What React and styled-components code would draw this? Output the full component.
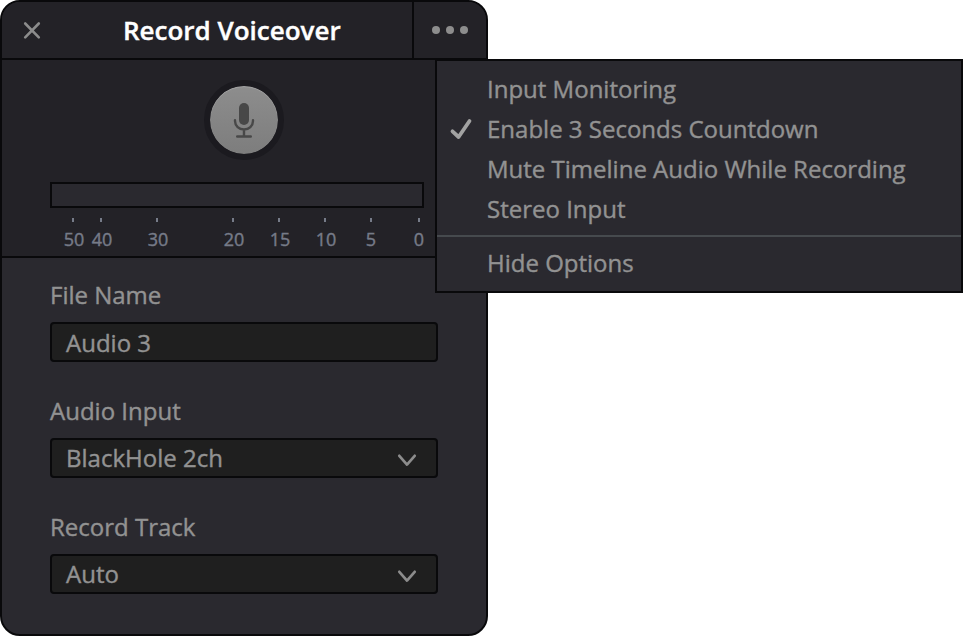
import React from "react";
import styled, { createGlobalStyle } from "styled-components";

const GlobalStyle = createGlobalStyle`
  :root {
    --line: #09090b;
    --surface: #2a292f;
    --surface-dark: #232227;
    --text: #929292;
    --scale: #767b88;
  }

  * {
    box-sizing: border-box;
  }

  body {
    margin: 0;
    background: #fff;
    color: var(--text);
    font-family: "Open Sans", "Noto Sans", sans-serif;
    font-size: 24px;
    line-height: 40px;
    -webkit-text-stroke: 0.4px currentColor;
  }
`;

const Panel = styled.div`
  position: relative;
  width: 488px;
  height: 636px;
  background: var(--surface);
  border: 2px solid var(--line);
  border-radius: 20px;
`;

const Header = styled.header`
  display: flex;
  height: 58px;
  background: var(--surface-dark);
  border-bottom: 2px solid var(--line);
  border-radius: 18px 18px 0 0;
`;

const IconButton = styled.button`
  display: flex;
  align-items: center;
  justify-content: center;
  width: ${props => props.$width}px;
  height: 56px;
  padding: 0;
  border: 0;
  border-left: ${props => (props.$divided ? "2px solid var(--line)" : "0")};
  background: none;
`;

const Title = styled.h1`
  flex: 1;
  margin: 0;
  padding-left: 61px;
  color: #fff;
  font-size: 26px;
  font-weight: 600;
  line-height: 57px;
  white-space: nowrap;
`;

const Recorder = styled.section`
  display: flex;
  flex-direction: column;
  height: 198px;
  padding: 20px 62px 0 48px;
  background: var(--surface-dark);
  border-bottom: 2px solid var(--line);
`;

const RecordButton = styled.button`
  width: 80px;
  height: 80px;
  margin-left: 154px;
  padding: 0;
  border: 6px solid #1b1a1f;
  border-radius: 50%;
  background: linear-gradient(#8d8d8d, #7d7d7d) padding-box;
  box-shadow: inset 0 1px 1px #a2a2a2;

  svg {
    display: block;
  }
`;

const Meter = styled.div`
  height: 26px;
  margin-top: 22px;
  background: var(--surface);
  border: 2px solid var(--line);
`;

const Scale = styled.div`
  display: flex;
  padding-top: 10px;
`;

const Mark = styled.div`
  display: flex;
  flex-direction: column;
  align-items: center;
  width: 0;
  margin-left: ${props => props.$gap}px;
  color: var(--scale);
  font-size: 18px;
  line-height: 24px;

  &::before {
    content: "";
    width: 2px;
    height: 4px;
    margin-bottom: 5px;
    background: currentColor;
  }

  span {
    margin-left: ${props => props.$nudge}px;
  }
`;

const Form = styled.form`
  display: flex;
  flex-direction: column;
  gap: 29px;
  padding: 17px 48px 0;
`;

const Field = styled.div`
  display: flex;
  flex-direction: column;
  gap: 7px;
`;

const Label = styled.span`
  height: 40px;
`;

const Control = styled.div`
  display: flex;
  align-items: center;
  justify-content: space-between;
  height: 40px;
  padding: 0 18px 0 14px;
  background: #1f1f1f;
  border: 2px solid var(--line);
  border-radius: 4px;

  svg {
    margin-top: 5px;
  }
`;

const Value = styled.span`
  line-height: ${props => (props.$select ? 38 : 36)}px;
  padding-top: ${props => (props.$select ? 0 : 2)}px;
`;

const Menu = styled.div`
  position: absolute;
  top: 57px;
  left: 433px;
  width: 528px;
  height: 234px;
  padding-top: 8px;
  background: var(--surface);
  border: 2px solid var(--line);
`;

const MenuItem = styled.div`
  display: grid;
  grid-template-columns: 50px auto;
  align-items: center;
  height: 40px;
  white-space: nowrap;

  span {
    grid-column: 2;
  }
`;

const Separator = styled.div`
  height: 2px;
  margin: 6px 0;
  background: #464a4e;
`;

const CloseIcon = () => (
  <svg width="20" height="20" viewBox="0 0 20 20">
    <path
      d="M3.2 3.5 16.8 17.3M16.8 3.5 3.2 17.3"
      stroke="#8c8c8c"
      strokeWidth="2.6"
      strokeLinecap="round"
    />
  </svg>
);

const MoreIcon = () => (
  <svg width="38" height="10" viewBox="0 0 38 10" fill="#8d8d8d">
    <circle cx="5" cy="5" r="4" />
    <circle cx="19" cy="5" r="4" />
    <circle cx="33" cy="5" r="4" />
  </svg>
);

const MicIcon = () => (
  <svg width="68" height="68" viewBox="0 0 68 68" fill="none">
    <rect x="29" y="17" width="10" height="22" rx="5" fill="#484848" />
    <path
      d="M25 34.2v.8a9 8.5 0 0 0 18 0v-.8M34 43.5V50M27.2 50.5h13.6"
      stroke="#484848"
      strokeWidth="2.4"
      strokeLinecap="round"
    />
  </svg>
);

const ChevronIcon = () => (
  <svg width="22" height="16" viewBox="0 0 22 16" fill="none">
    <path
      d="M3.3 2.8 11 11.6 18.7 2.8"
      stroke="#8c8c8c"
      strokeWidth="2.7"
      strokeLinecap="round"
      strokeLinejoin="round"
    />
  </svg>
);

const CheckIcon = () => (
  <svg width="50" height="40" viewBox="0 0 50 40" fill="none">
    <path
      d="M15.5 22.3 21.6 28 32.5 12"
      stroke="#a2a2a2"
      strokeWidth="3.8"
      strokeLinecap="round"
      strokeLinejoin="round"
    />
  </svg>
);

// gap is the distance in px from the previous mark
const marks = [
  { value: 50, gap: 23, nudge: 2 },
  { value: 40, gap: 28, nudge: 2 },
  { value: 30, gap: 56, nudge: 2 },
  { value: 20, gap: 76, nudge: 2 },
  { value: 15, gap: 46, nudge: 2 },
  { value: 10, gap: 46, nudge: 2 },
  { value: 5, gap: 46, nudge: 0 },
  { value: 0, gap: 48, nudge: 0 }
];

const fields = [
  { label: "File Name", value: "Audio 3" },
  { label: "Audio Input", value: "BlackHole 2ch", select: true },
  { label: "Record Track", value: "Auto", select: true }
];

const options = [
  { label: "Input Monitoring" },
  { label: "Enable 3 Seconds Countdown", checked: true },
  { label: "Mute Timeline Audio While Recording" },
  { label: "Stereo Input" }
];

const App = () => {
  return (
    <>
      <GlobalStyle />
      <Panel>
        <Header>
          <IconButton $width={60} aria-label="Close">
            <CloseIcon />
          </IconButton>
          <Title>Record Voiceover</Title>
          <IconButton $width={74} $divided aria-label="Options">
            <MoreIcon />
          </IconButton>
        </Header>
        <Recorder>
          <RecordButton aria-label="Record">
            <MicIcon />
          </RecordButton>
          <Meter />
          <Scale>
            {marks.map(mark => (
              <Mark key={mark.value} $gap={mark.gap} $nudge={mark.nudge}>
                <span>{mark.value}</span>
              </Mark>
            ))}
          </Scale>
        </Recorder>
        <Form>
          {fields.map(field => (
            <Field key={field.label}>
              <Label>{field.label}</Label>
              <Control>
                <Value $select={field.select}>{field.value}</Value>
                {field.select && <ChevronIcon />}
              </Control>
            </Field>
          ))}
        </Form>
        <Menu>
          {options.map(option => (
            <MenuItem key={option.label}>
              {option.checked && <CheckIcon />}
              <span>{option.label}</span>
            </MenuItem>
          ))}
          <Separator />
          <MenuItem>
            <span>Hide Options</span>
          </MenuItem>
        </Menu>
      </Panel>
    </>
  );
};

export default App;
